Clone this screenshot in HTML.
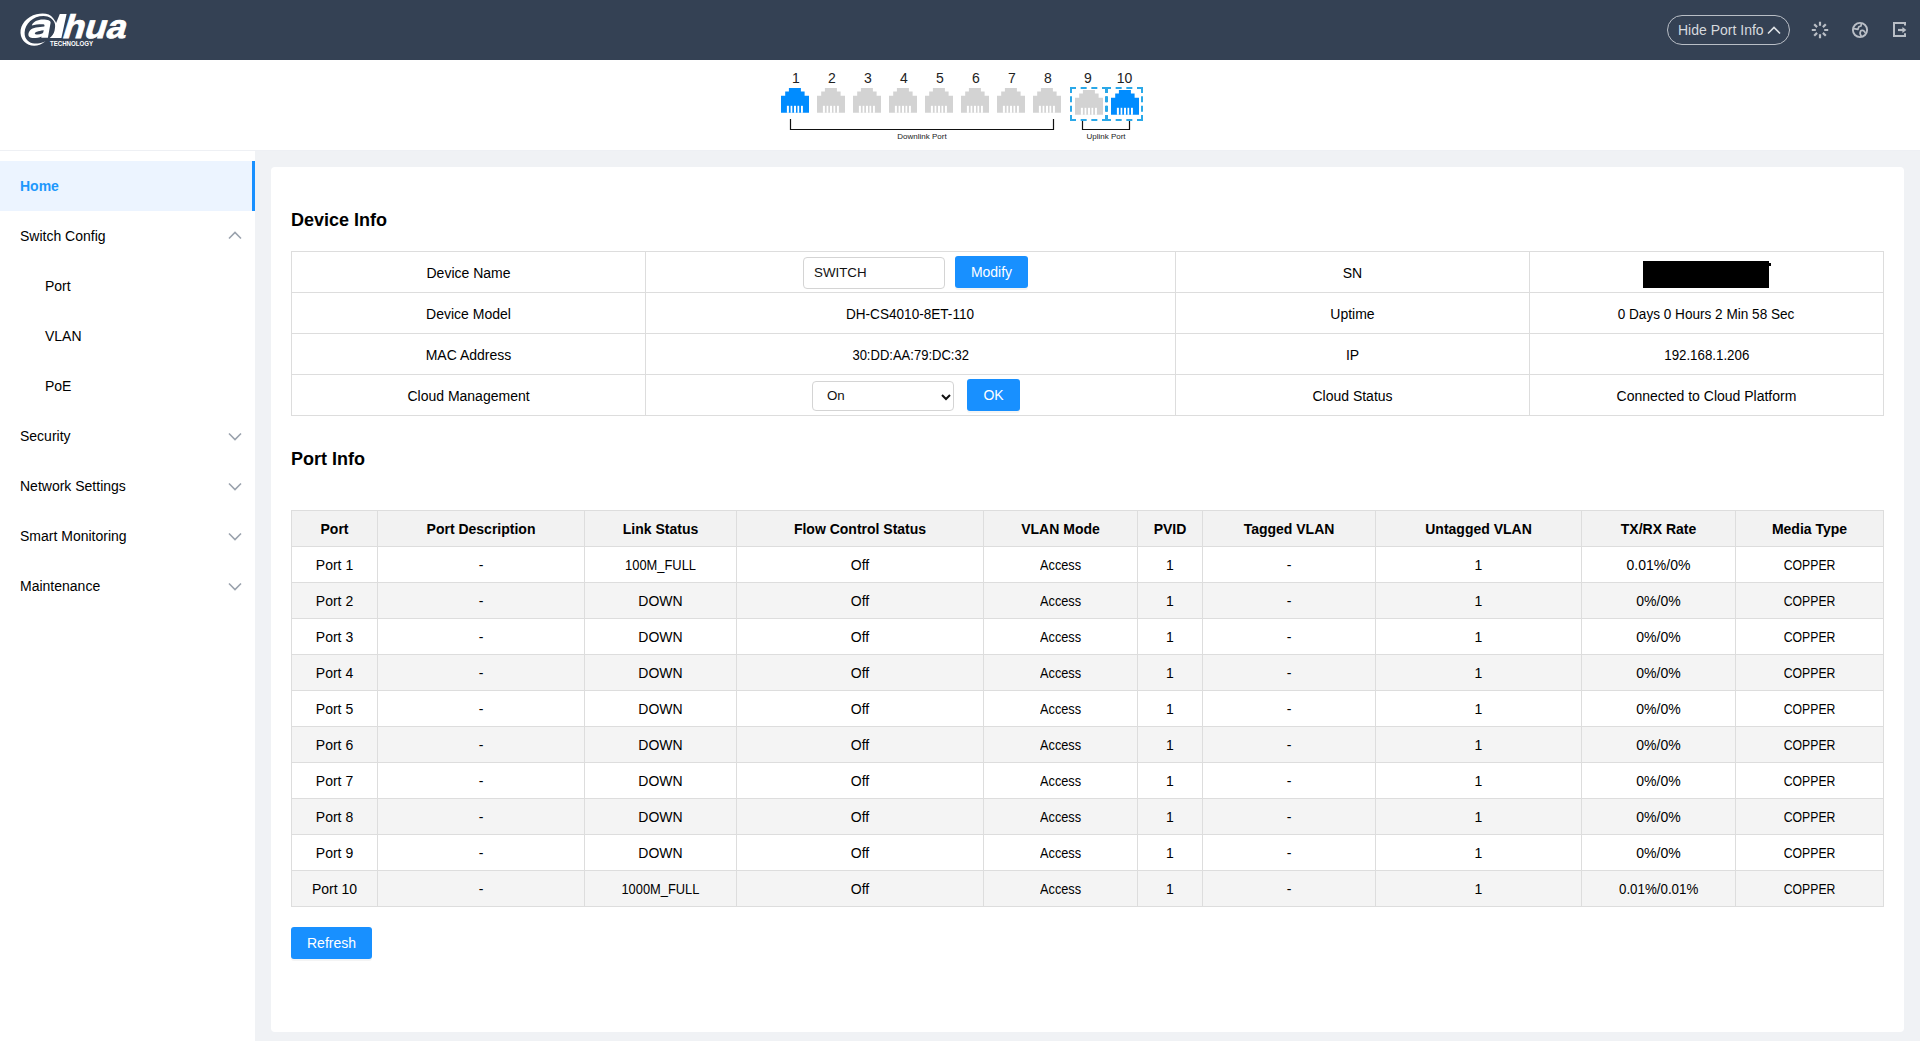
<!DOCTYPE html>
<html><head><meta charset="utf-8">
<style>
*{box-sizing:border-box;}
html,body{margin:0;padding:0;width:1920px;height:1041px;overflow:hidden;background:#f0f2f5;font-family:"Liberation Sans",sans-serif;color:#222;}
.hdr{position:absolute;left:0;top:0;width:1920px;height:60px;background:#344154;}
.ports{position:absolute;left:0;top:60px;width:1920px;height:90px;background:#fff;}
.hline{position:absolute;left:0;top:150px;width:1920px;height:1px;background:#eef0f4;}
.side{position:absolute;left:0;top:151px;width:255px;height:890px;background:#fff;}
.mi{position:absolute;left:0;width:255px;height:50px;font-size:14px;line-height:50px;color:#000;}
.mi span{position:absolute;left:20px;top:0;}
.mi.sub span{left:45px;}
.mi.act{background:#ecf4ff;}
.mi.act span{color:#1e98fc;font-weight:bold;}
.mi.act:after{content:"";position:absolute;right:0;top:0;width:3px;height:50px;background:#1890ff;}
.mi svg{position:absolute;left:228px;top:20px;}
.card{position:absolute;left:271px;top:167px;width:1633px;height:865px;background:#fff;border-radius:4px;}
.h2{position:absolute;left:20px;font-size:18px;font-weight:bold;color:#000;}
table{border-collapse:collapse;table-layout:fixed;position:absolute;left:20px;}
td,th{border:1px solid #ddd;text-align:center;font-size:14px;padding:0;color:#000;}
.dev td{height:41px;padding-top:2px;}
.pt th{height:36px;background:#f2f2f2;font-weight:bold;color:#000;}
.pt td{height:36px;}
.pt tr:nth-child(odd) td{background:#f4f4f4;}
.sx{display:inline-block;}
.btn{position:absolute;background:#1890ff;color:#fff;font-size:13.333px;border-radius:3px;text-align:center;box-shadow:0 2px 0 rgba(0,0,0,0.045);}
</style></head>
<body>
<div class="hdr">
  <svg width="140" height="60" style="position:absolute;left:0;top:0" font-family="Liberation Sans">
    <g fill="#fff">
      <path d="M45.5 41.2C41.5 44.6 37.5 45.8 34 45.7C26.5 45.5 21 40.5 20.5 33C20 24.5 27 16.5 36.5 14.2C43.5 12.5 50 13.5 53 18C54.5 20 55.5 21.5 56.1 22.9L59.8 14H66.6L61.4 38H49.7C52 36 54 33.5 54.6 30.5C55.2 27.5 55.3 25 54.8 23.5C53.5 19 49 16.3 43.7 16.1C33 16 25 24 24.6 32.5C24.3 39.5 29.5 43.4 34.4 43.5C38.5 43.6 42.5 42.8 45.5 41.2Z"/>
      <path fill-rule="evenodd" d="M31.8 25.5C33 21.8 37.5 19.6 43 19.6C47.5 19.6 50.8 20.6 50.6 22.8L47.9 37.7H41.3L41.5 36.5C39.5 37.6 36.5 38 33.5 38C30 38 28.1 36.6 28.4 34C28.9 30 32.3 27.8 38 27.2L44.3 26.6L44.5 25.6C44.7 24.6 43.8 24.3 42.3 24.3C38.5 24.3 34.5 24.8 31.8 25.5ZM34.8 33.7C35 32 37.5 31 43.7 30.2L43.3 32.3C42.9 33.6 40.5 34.4 37.8 34.4C35.8 34.4 34.7 34.3 34.8 33.7Z"/>
      <text transform="translate(61,38) skewX(-17) scale(1.08,1)" x="0" y="0" font-size="33" font-weight="bold" stroke="#fff" stroke-width="0.8">hua</text>
      <text x="50" y="45.8" font-size="7" font-weight="bold" textLength="43" lengthAdjust="spacingAndGlyphs">TECHNOLOGY</text>
    </g>
  </svg>
  <div style="position:absolute;left:1667px;top:15px;width:123px;height:30px;border:1px solid #b9bec6;border-radius:15px;color:#d6d9de;font-size:14px;line-height:28px;padding-left:10px;">Hide Port Info<svg width="14" height="9" style="position:absolute;left:99px;top:10px"><path d="M1 7.5 L7 1.5 L13 7.5" fill="none" stroke="#dfe2e6" stroke-width="1.6"/></svg></div>
  <svg width="120" height="60" style="position:absolute;left:1800px;top:0" stroke="#b9bec6" fill="none" stroke-width="2.2">
    <g transform="translate(20,30)">
      <path d="M0 -8.2V-4.2M0 4.2V8.2M-8.2 0H-4.2M4.2 0H8.2"/>
      <path d="M-5.8 -5.8L-2.9 -2.9M2.9 2.9L5.8 5.8M5.8 -5.8L2.9 -2.9M-2.9 2.9L-5.8 5.8"/>
    </g>
    <g transform="translate(60,30)" stroke-width="1.9">
      <circle cx="0" cy="0" r="7.1"/>
      <path d="M-6.2 -1.4L-2.1 -0.6L-1.15 -3.3L0.95 -4L1.5 -6.5" stroke-width="1.7" stroke-linejoin="round"/>
      <path d="M1.35 6.2C0 4.5 -0.5 3 0.6 1.1C1.5 -0.2 3.8 0.3 4.4 1.6L5.4 2.9" stroke-width="1.7" stroke-linejoin="round"/>
    </g>
    <g transform="translate(1893,22) translate(-1800,0)" stroke-width="2">
      <path d="M12 3.6V1H1V14H12V11.2"/>
      <path d="M5 8H10.5" stroke-width="2.2"/>
      <path d="M9.4 5L13.4 8L9.4 11Z" fill="#b9bec6" stroke="none"/>
    </g>
  </svg>
</div>
<div class="ports"><div style="position:absolute;left:1070px;top:27px;width:38px;height:34px;border:2px dashed #2aa8e8;"></div><div style="position:absolute;left:1105px;top:27px;width:38px;height:34px;border:2px dashed #2aa8e8;"></div><svg width="1920" height="90" style="position:absolute;left:0;top:0" font-family="Liberation Sans" font-size="14" fill="#222"><g transform="translate(781,28)"><path d="M0 7.8H4.2V3.4H7.9V0H19.9V3.4H23.6V7.8H28V24.7H0Z" fill="#008cff"/><rect x="5.9" y="17.8" width="2.0" height="7" fill="#fff"/><rect x="9.6" y="17.8" width="1.7" height="7" fill="#fff"/><rect x="13" y="17.8" width="2.0" height="7" fill="#fff"/><rect x="16.5" y="17.8" width="1.7" height="7" fill="#fff"/><rect x="20" y="17.8" width="1.9" height="7" fill="#fff"/></g><text x="796" y="23" text-anchor="middle">1</text><g transform="translate(817,28)"><path d="M0 7.8H4.2V3.4H7.9V0H19.9V3.4H23.6V7.8H28V24.7H0Z" fill="#d3d3d3"/><rect x="5.9" y="17.8" width="2.0" height="7" fill="#fff"/><rect x="9.6" y="17.8" width="1.7" height="7" fill="#fff"/><rect x="13" y="17.8" width="2.0" height="7" fill="#fff"/><rect x="16.5" y="17.8" width="1.7" height="7" fill="#fff"/><rect x="20" y="17.8" width="1.9" height="7" fill="#fff"/></g><text x="832" y="23" text-anchor="middle">2</text><g transform="translate(853,28)"><path d="M0 7.8H4.2V3.4H7.9V0H19.9V3.4H23.6V7.8H28V24.7H0Z" fill="#d3d3d3"/><rect x="5.9" y="17.8" width="2.0" height="7" fill="#fff"/><rect x="9.6" y="17.8" width="1.7" height="7" fill="#fff"/><rect x="13" y="17.8" width="2.0" height="7" fill="#fff"/><rect x="16.5" y="17.8" width="1.7" height="7" fill="#fff"/><rect x="20" y="17.8" width="1.9" height="7" fill="#fff"/></g><text x="868" y="23" text-anchor="middle">3</text><g transform="translate(889,28)"><path d="M0 7.8H4.2V3.4H7.9V0H19.9V3.4H23.6V7.8H28V24.7H0Z" fill="#d3d3d3"/><rect x="5.9" y="17.8" width="2.0" height="7" fill="#fff"/><rect x="9.6" y="17.8" width="1.7" height="7" fill="#fff"/><rect x="13" y="17.8" width="2.0" height="7" fill="#fff"/><rect x="16.5" y="17.8" width="1.7" height="7" fill="#fff"/><rect x="20" y="17.8" width="1.9" height="7" fill="#fff"/></g><text x="904" y="23" text-anchor="middle">4</text><g transform="translate(925,28)"><path d="M0 7.8H4.2V3.4H7.9V0H19.9V3.4H23.6V7.8H28V24.7H0Z" fill="#d3d3d3"/><rect x="5.9" y="17.8" width="2.0" height="7" fill="#fff"/><rect x="9.6" y="17.8" width="1.7" height="7" fill="#fff"/><rect x="13" y="17.8" width="2.0" height="7" fill="#fff"/><rect x="16.5" y="17.8" width="1.7" height="7" fill="#fff"/><rect x="20" y="17.8" width="1.9" height="7" fill="#fff"/></g><text x="940" y="23" text-anchor="middle">5</text><g transform="translate(961,28)"><path d="M0 7.8H4.2V3.4H7.9V0H19.9V3.4H23.6V7.8H28V24.7H0Z" fill="#d3d3d3"/><rect x="5.9" y="17.8" width="2.0" height="7" fill="#fff"/><rect x="9.6" y="17.8" width="1.7" height="7" fill="#fff"/><rect x="13" y="17.8" width="2.0" height="7" fill="#fff"/><rect x="16.5" y="17.8" width="1.7" height="7" fill="#fff"/><rect x="20" y="17.8" width="1.9" height="7" fill="#fff"/></g><text x="976" y="23" text-anchor="middle">6</text><g transform="translate(997,28)"><path d="M0 7.8H4.2V3.4H7.9V0H19.9V3.4H23.6V7.8H28V24.7H0Z" fill="#d3d3d3"/><rect x="5.9" y="17.8" width="2.0" height="7" fill="#fff"/><rect x="9.6" y="17.8" width="1.7" height="7" fill="#fff"/><rect x="13" y="17.8" width="2.0" height="7" fill="#fff"/><rect x="16.5" y="17.8" width="1.7" height="7" fill="#fff"/><rect x="20" y="17.8" width="1.9" height="7" fill="#fff"/></g><text x="1012" y="23" text-anchor="middle">7</text><g transform="translate(1033,28)"><path d="M0 7.8H4.2V3.4H7.9V0H19.9V3.4H23.6V7.8H28V24.7H0Z" fill="#d3d3d3"/><rect x="5.9" y="17.8" width="2.0" height="7" fill="#fff"/><rect x="9.6" y="17.8" width="1.7" height="7" fill="#fff"/><rect x="13" y="17.8" width="2.0" height="7" fill="#fff"/><rect x="16.5" y="17.8" width="1.7" height="7" fill="#fff"/><rect x="20" y="17.8" width="1.9" height="7" fill="#fff"/></g><text x="1048" y="23" text-anchor="middle">8</text><g transform="translate(1075,30)"><path d="M0 7.8H4.2V3.4H7.9V0H19.9V3.4H23.6V7.8H28V24.7H0Z" fill="#d3d3d3"/><rect x="5.9" y="17.8" width="2.0" height="7" fill="#fff"/><rect x="9.6" y="17.8" width="1.7" height="7" fill="#fff"/><rect x="13" y="17.8" width="2.0" height="7" fill="#fff"/><rect x="16.5" y="17.8" width="1.7" height="7" fill="#fff"/><rect x="20" y="17.8" width="1.9" height="7" fill="#fff"/></g><g transform="translate(1111,30)"><path d="M0 7.8H4.2V3.4H7.9V0H19.9V3.4H23.6V7.8H28V24.7H0Z" fill="#008cff"/><rect x="5.9" y="17.8" width="2.0" height="7" fill="#fff"/><rect x="9.6" y="17.8" width="1.7" height="7" fill="#fff"/><rect x="13" y="17.8" width="2.0" height="7" fill="#fff"/><rect x="16.5" y="17.8" width="1.7" height="7" fill="#fff"/><rect x="20" y="17.8" width="1.9" height="7" fill="#fff"/></g><text x="1088" y="23" text-anchor="middle">9</text><text x="1124.5" y="23" text-anchor="middle">10</text><path d="M790.5 59V69.5H1053.5V59" fill="none" stroke="#111" stroke-width="1.2"/><path d="M1082.5 61V69.5H1129.5V61" fill="none" stroke="#111" stroke-width="1.2"/><text x="922" y="79" text-anchor="middle" font-size="8" fill="#222">Downlink Port</text><text x="1106" y="79" text-anchor="middle" font-size="8" fill="#222">Uplink Port</text></svg></div>
<div class="hline"></div>
<div class="side">
  <div class="mi act" style="top:10px"><span>Home</span></div>
  <div class="mi" style="top:60px"><span>Switch Config</span><svg width="14" height="9"><path d="M1 7.5L7 1.5L13 7.5" fill="none" stroke="#9aa2ad" stroke-width="1.6"/></svg></div>
  <div class="mi sub" style="top:110px"><span>Port</span></div>
  <div class="mi sub" style="top:160px"><span>VLAN</span></div>
  <div class="mi sub" style="top:210px"><span>PoE</span></div>
  <div class="mi" style="top:260px"><span>Security</span><svg width="14" height="9" style="top:21px"><path d="M1 1.5L7 7.5L13 1.5" fill="none" stroke="#9aa2ad" stroke-width="1.6"/></svg></div>
  <div class="mi" style="top:310px"><span>Network Settings</span><svg width="14" height="9" style="top:21px"><path d="M1 1.5L7 7.5L13 1.5" fill="none" stroke="#9aa2ad" stroke-width="1.6"/></svg></div>
  <div class="mi" style="top:360px"><span>Smart Monitoring</span><svg width="14" height="9" style="top:21px"><path d="M1 1.5L7 7.5L13 1.5" fill="none" stroke="#9aa2ad" stroke-width="1.6"/></svg></div>
  <div class="mi" style="top:410px"><span>Maintenance</span><svg width="14" height="9" style="top:21px"><path d="M1 1.5L7 7.5L13 1.5" fill="none" stroke="#9aa2ad" stroke-width="1.6"/></svg></div>
</div>
<div class="card">
  <div class="h2" style="top:43px">Device Info</div>
  <div class="h2" style="top:282px">Port Info</div>
  <div style="position:absolute;left:532px;top:90px;width:142px;height:32px;border:1px solid #d4d4d4;border-radius:4px;font-size:13.333px;line-height:30px;padding-left:10px;color:#111;">SWITCH</div>
  <div class="btn" style="left:684px;top:89px;width:73px;height:32px;line-height:32px;font-size:14px;">Modify</div>
  <div style="position:absolute;left:541px;top:214px;width:142px;height:30px;border:1px solid #d4d4d4;border-radius:4px;font-size:13.333px;line-height:28px;padding-left:14px;color:#111;">On
    <svg width="10" height="7" style="position:absolute;left:128px;top:12px"><path d="M1 1 L5 5 L9 1" fill="none" stroke="#111" stroke-width="2"/></svg></div>
  <div class="btn" style="left:696px;top:212px;width:53px;height:32px;line-height:32px;font-size:14px;">OK</div>
  <div style="position:absolute;left:1372px;top:94px;width:126px;height:27px;background:#000;"></div>
  <div style="position:absolute;left:1498px;top:96px;width:2px;height:3px;background:#000;"></div>
  <div class="btn" style="left:20px;top:760px;width:81px;height:32px;line-height:32px;font-size:14px;">Refresh</div>
  <table class="dev" style="top:84px;width:1593px">
  <colgroup><col style="width:354px"><col style="width:530px"><col style="width:354px"><col style="width:354px"></colgroup>
  <tr><td>Device Name</td><td></td><td>SN</td><td></td></tr>
  <tr><td>Device Model</td><td><span class="sx" style="transform:scaleX(0.97)">DH-CS4010-8ET-110</span></td><td>Uptime</td><td><span class="sx" style="transform:scaleX(0.97)">0 Days 0 Hours 2 Min 58 Sec</span></td></tr>
  <tr><td>MAC Address</td><td><span class="sx" style="transform:scaleX(0.93)">30:DD:AA:79:DC:32</span></td><td>IP</td><td><span class="sx" style="transform:scaleX(0.95)">192.168.1.206</span></td></tr>
  <tr><td>Cloud Management</td><td></td><td>Cloud Status</td><td>Connected to Cloud Platform</td></tr>
  </table>
  <table class="pt" style="top:343px;width:1593px">
  <colgroup><col style="width:86px"><col style="width:207px"><col style="width:152px"><col style="width:247px"><col style="width:154px"><col style="width:65px"><col style="width:173px"><col style="width:206px"><col style="width:154px"><col style="width:148px"></colgroup>
  <tr><th>Port</th><th>Port Description</th><th>Link Status</th><th>Flow Control Status</th><th>VLAN Mode</th><th>PVID</th><th>Tagged VLAN</th><th>Untagged VLAN</th><th>TX/RX Rate</th><th>Media Type</th></tr>
  <tr><td>Port 1</td><td>-</td><td><span class="sx" style="transform:scaleX(0.921)">100M_FULL</span></td><td>Off</td><td><span class="sx" style="transform:scaleX(0.909)">Access</span></td><td>1</td><td>-</td><td>1</td><td>0.01%/0%</td><td><span class="sx" style="transform:scaleX(0.874)">COPPER</span></td></tr>
  <tr><td>Port 2</td><td>-</td><td>DOWN</td><td>Off</td><td><span class="sx" style="transform:scaleX(0.909)">Access</span></td><td>1</td><td>-</td><td>1</td><td>0%/0%</td><td><span class="sx" style="transform:scaleX(0.874)">COPPER</span></td></tr>
  <tr><td>Port 3</td><td>-</td><td>DOWN</td><td>Off</td><td><span class="sx" style="transform:scaleX(0.909)">Access</span></td><td>1</td><td>-</td><td>1</td><td>0%/0%</td><td><span class="sx" style="transform:scaleX(0.874)">COPPER</span></td></tr>
  <tr><td>Port 4</td><td>-</td><td>DOWN</td><td>Off</td><td><span class="sx" style="transform:scaleX(0.909)">Access</span></td><td>1</td><td>-</td><td>1</td><td>0%/0%</td><td><span class="sx" style="transform:scaleX(0.874)">COPPER</span></td></tr>
  <tr><td>Port 5</td><td>-</td><td>DOWN</td><td>Off</td><td><span class="sx" style="transform:scaleX(0.909)">Access</span></td><td>1</td><td>-</td><td>1</td><td>0%/0%</td><td><span class="sx" style="transform:scaleX(0.874)">COPPER</span></td></tr>
  <tr><td>Port 6</td><td>-</td><td>DOWN</td><td>Off</td><td><span class="sx" style="transform:scaleX(0.909)">Access</span></td><td>1</td><td>-</td><td>1</td><td>0%/0%</td><td><span class="sx" style="transform:scaleX(0.874)">COPPER</span></td></tr>
  <tr><td>Port 7</td><td>-</td><td>DOWN</td><td>Off</td><td><span class="sx" style="transform:scaleX(0.909)">Access</span></td><td>1</td><td>-</td><td>1</td><td>0%/0%</td><td><span class="sx" style="transform:scaleX(0.874)">COPPER</span></td></tr>
  <tr><td>Port 8</td><td>-</td><td>DOWN</td><td>Off</td><td><span class="sx" style="transform:scaleX(0.909)">Access</span></td><td>1</td><td>-</td><td>1</td><td>0%/0%</td><td><span class="sx" style="transform:scaleX(0.874)">COPPER</span></td></tr>
  <tr><td>Port 9</td><td>-</td><td>DOWN</td><td>Off</td><td><span class="sx" style="transform:scaleX(0.909)">Access</span></td><td>1</td><td>-</td><td>1</td><td>0%/0%</td><td><span class="sx" style="transform:scaleX(0.874)">COPPER</span></td></tr>
  <tr><td>Port 10</td><td>-</td><td><span class="sx" style="transform:scaleX(0.919)">1000M_FULL</span></td><td>Off</td><td><span class="sx" style="transform:scaleX(0.909)">Access</span></td><td>1</td><td>-</td><td>1</td><td><span class="sx" style="transform:scaleX(0.952)">0.01%/0.01%</span></td><td><span class="sx" style="transform:scaleX(0.874)">COPPER</span></td></tr>
  </table>
</div>
</body></html>
